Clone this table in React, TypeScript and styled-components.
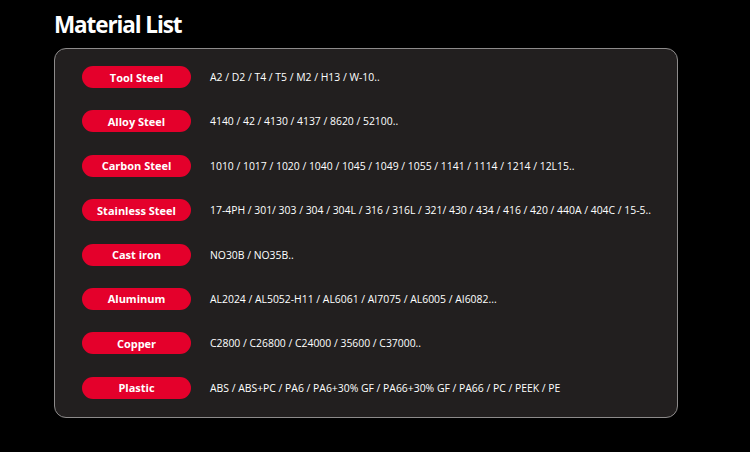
import React from "react";
import styled, { createGlobalStyle } from "styled-components";

type Material = {
  name: string;
  grades: string;
};

const materials: Material[] = [
  { name: "Tool Steel", grades: "A2 / D2 / T4 / T5 / M2 / H13 / W-10.." },
  { name: "Alloy Steel", grades: "4140 / 42 / 4130 / 4137 / 8620 / 52100.." },
  {
    name: "Carbon Steel",
    grades:
      "1010 / 1017 / 1020 / 1040 / 1045 / 1049 / 1055 / 1141 / 1114 / 1214 / 12L15..",
  },
  {
    name: "Stainless Steel",
    grades:
      "17-4PH / 301/ 303 / 304 / 304L / 316 / 316L / 321/ 430 / 434 / 416 / 420 / 440A / 404C / 15-5..",
  },
  { name: "Cast iron", grades: "NO30B / NO35B.." },
  {
    name: "Aluminum",
    grades: "AL2024 / AL5052-H11 / AL6061 / AI7075 / AL6005 / AI6082...",
  },
  { name: "Copper", grades: "C2800 / C26800 / C24000 / 35600 / C37000.." },
  {
    name: "Plastic",
    grades: "ABS / ABS+PC / PA6 / PA6+30% GF / PA66+30% GF / PA66 / PC / PEEK / PE",
  },
];

const GlobalStyle = createGlobalStyle`
  body {
    margin: 0;
    background: #000;
    font-family: "Open Sans", "Noto Sans", sans-serif;
    color: #fff;
  }
`;

const Page = styled.div`
  width: 750px;
  height: 452px;
  padding: 9px 0 0 54px;
  box-sizing: border-box;
  background: #000;
`;

const Title = styled.h1`
  margin: 0 0 8px;
  font-size: 22.5px;
  font-weight: 700;
  line-height: 31px;
  letter-spacing: -1.1px;
`;

const Card = styled.div`
  width: 624px;
  height: 370px;
  box-sizing: border-box;
  background: #221f1f;
  border: 1px solid #8d8b8b;
  border-radius: 12px;
  padding: 17px 27px;
  display: flex;
  flex-direction: column;
  gap: 22.4px;
`;

const Row = styled.div`
  display: flex;
  align-items: center;
  gap: 19px;
  height: 22px;
`;

const Pill = styled.span`
  flex: none;
  width: 109px;
  height: 22px;
  border-radius: 11px;
  background: #e4002b;
  display: flex;
  align-items: center;
  justify-content: center;
  font-size: 11px;
  font-weight: 700;
  color: #fff;
`;

const Grades = styled.span`
  font-size: 10.4px;
  color: #fff;
  white-space: nowrap;
`;

export default function App() {
  return (
    <Page>
      <GlobalStyle />
      <Title>Material List</Title>
      <Card>
        {materials.map((m) => (
          <Row key={m.name}>
            <Pill>{m.name}</Pill>
            <Grades>{m.grades}</Grades>
          </Row>
        ))}
      </Card>
    </Page>
  );
}
